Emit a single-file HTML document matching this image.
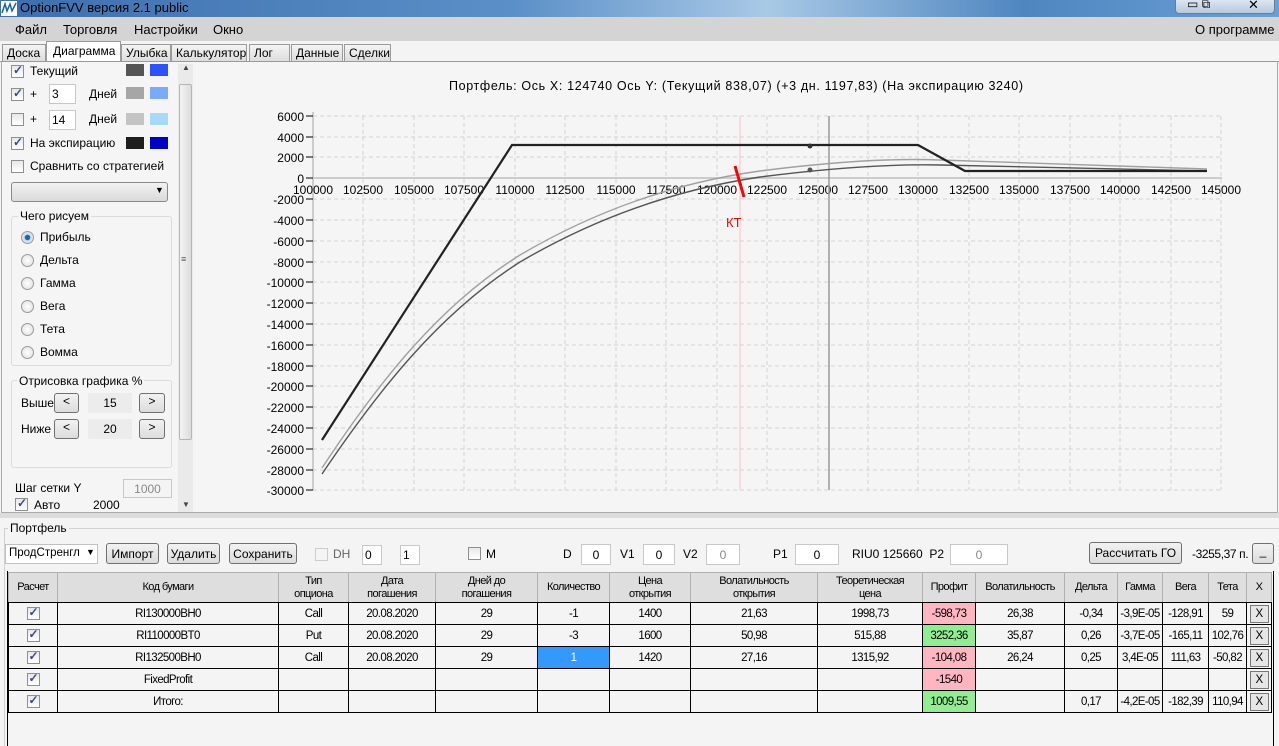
<!DOCTYPE html><html><head><meta charset="utf-8"><style>
*{box-sizing:border-box;margin:0;padding:0}
body{width:1279px;height:746px;overflow:hidden;background:#f4f4f4;font-family:"Liberation Sans",sans-serif;font-size:12px;color:#000;position:relative}
.a{position:absolute}
.cb{position:absolute;width:13px;height:13px;border:1px solid #8e8f8f;background:linear-gradient(#e8e8e8,#fff)}
.cb.c::after{content:"✓";position:absolute;left:1px;top:-3px;font-size:12px;color:#3a4a8a;font-weight:bold}
.ic{display:inline-block;position:relative;width:13px;height:13px;border:1px solid #8e8f8f;background:linear-gradient(#e8e8e8,#fff);vertical-align:middle}
.ic::after{content:"✓";position:absolute;left:1px;top:-3px;font-size:12px;color:#3a4a8a;font-weight:bold}
.rb{position:absolute;width:13px;height:13px;border-radius:50%;border:1px solid #9a9a9a;background:radial-gradient(#fff,#ddd)}
.btn{position:absolute;border:1px solid #707070;border-radius:3px;background:linear-gradient(#f2f2f2,#dcdcdc);text-align:center;font-size:12px}
.tb{position:absolute;border:1px solid #c8c8c8;background:#fff;text-align:center}
.tab{position:absolute;top:44px;height:18px;border:1px solid #9a9a9a;border-bottom:none;background:linear-gradient(#f4f4f4,#dcdcdc);font-size:12px;padding:1px 4px}
table{border-collapse:collapse;position:absolute;left:8px;top:572px;font-size:11.5px;font-family:"Liberation Sans",sans-serif;table-layout:fixed}
td{border:1px solid #000;text-align:center;height:22px;padding:0;letter-spacing:-0.6px;white-space:nowrap;overflow:hidden}
tr.h td{background:#dedede;border-color:#b0b0b0 #b0b0b0 #000;height:30px;line-height:13px;font-size:11px;white-space:normal}
.x{display:inline-block;border:1px solid #777;background:#e6e6e6;width:19px;height:18px;line-height:16px}
.ax{font-size:12px;fill:#000}
</style></head><body>
<div class="a" style="left:0;top:0;width:1279px;height:18px;background:linear-gradient(90deg,#3d6fae,#5a8fc7 40%,#a9c9e6 60%,#4f86c0 80%,#6aa0d4)"></div>
<svg class="a" style="left:1px;top:1px" width="16" height="15"><rect width="16" height="15" fill="#fff"/><path d="M1,12 L4,3 L6,10 L9,3 L11,10 L15,2" fill="none" stroke="#1a5fb4" stroke-width="1.5"/></svg>
<div class="a" style="left:20px;top:0;font-size:13px;color:#000">OptionFVV версия 2.1 public</div>
<div class="a" style="left:1175px;top:0;width:100px;height:14px;border:1px solid #6a7d95;border-top:none;border-radius:0 0 4px 4px;background:linear-gradient(#dbe6f2,#b7c9dd)"></div>
<div class="a" style="left:1187px;top:-3px;font-size:12px">▭ ⧉</div>
<div class="a" style="left:1248px;top:-3px;font-size:13px">✕</div>
<div class="a" style="left:0;top:17px;width:1279px;height:24px;background:#d4d4d4"></div>
<div class="a" style="left:15px;top:22px;font-size:13px">Файл</div>
<div class="a" style="left:63px;top:22px;font-size:13px">Торговля</div>
<div class="a" style="left:134px;top:22px;font-size:13px">Настройки</div>
<div class="a" style="left:213px;top:22px;font-size:13px">Окно</div>
<div class="a" style="left:1195px;top:22px;font-size:13px">О программе</div>
<div class="tab" style="left:2px;width:44px">Доска</div>
<div class="a" style="left:46px;top:41px;width:75px;height:22px;background:#fff;border:1px solid #9a9a9a;border-bottom:none;padding:2px 6px;font-size:12px">Диаграмма</div>
<div class="tab" style="left:121px;width:50px">Улыбка</div>
<div class="tab" style="left:171px;width:76px">Калькулятор</div>
<div class="tab" style="left:249px;width:41px">Лог</div>
<div class="tab" style="left:291px;width:52px">Данные</div>
<div class="tab" style="left:344px;width:47px">Сделки</div>
<div class="a" style="left:0;top:61px;width:1279px;height:1px;background:#9a9a9a"></div>
<div class="a" style="left:1px;top:62px;width:1277px;height:451px;background:#f5f5f5;border:1px solid #aaa;border-top:none"></div>
<!-- left panel -->
<div class="cb c" style="left:11px;top:65px"></div><div class="a" style="left:30px;top:64px">Текущий</div>
<div class="a" style="left:126px;top:64px;width:18px;height:12px;background:#555"></div><div class="a" style="left:150px;top:64px;width:18px;height:12px;background:#2a53ff"></div>
<div class="cb c" style="left:11px;top:88px"></div><div class="a" style="left:30px;top:87px">+</div>
<div class="tb" style="left:49px;top:84px;width:27px;height:20px;text-align:left;padding:2px 2px">3</div><div class="a" style="left:89px;top:87px">Дней</div>
<div class="a" style="left:126px;top:87px;width:18px;height:12px;background:#a6a6a6"></div><div class="a" style="left:150px;top:87px;width:18px;height:12px;background:#7ba9ff"></div>
<div class="cb" style="left:11px;top:113px"></div><div class="a" style="left:30px;top:112px">+</div>
<div class="tb" style="left:49px;top:110px;width:27px;height:20px;text-align:left;padding:2px 2px">14</div><div class="a" style="left:89px;top:112px">Дней</div>
<div class="a" style="left:126px;top:113px;width:18px;height:12px;background:#c4c4c4"></div><div class="a" style="left:150px;top:113px;width:18px;height:12px;background:#a9d8ff"></div>
<div class="cb c" style="left:11px;top:137px"></div><div class="a" style="left:30px;top:136px">На экспирацию</div>
<div class="a" style="left:126px;top:137px;width:18px;height:12px;background:#1e1e1e"></div><div class="a" style="left:150px;top:137px;width:18px;height:12px;background:#0000c8"></div>
<div class="cb" style="left:11px;top:160px"></div><div class="a" style="left:30px;top:159px">Сравнить со стратегией</div>
<div class="a" style="left:11px;top:182px;width:157px;height:20px;border:1px solid #8a8a8a;border-radius:3px;background:linear-gradient(#f2f2f2,#dadada)"></div>
<div class="a" style="left:155px;top:185px;font-size:9px">▼</div>
<div class="a" style="left:11px;top:216px;width:161px;height:150px;border:1px solid #dcdcdc;border-radius:3px"></div>
<div class="a" style="left:18px;top:209px;background:#f5f5f5;padding:0 2px">Чего рисуем</div>
<div class="rb" style="left:21px;top:231px;background:radial-gradient(#1a6aa8 30%,#cde 40%,#eee)"></div><div class="a" style="left:40px;top:230px">Прибыль</div>
<div class="rb" style="left:21px;top:254px"></div><div class="a" style="left:40px;top:253px">Дельта</div>
<div class="rb" style="left:21px;top:277px"></div><div class="a" style="left:40px;top:276px">Гамма</div>
<div class="rb" style="left:21px;top:300px"></div><div class="a" style="left:40px;top:299px">Вега</div>
<div class="rb" style="left:21px;top:323px"></div><div class="a" style="left:40px;top:322px">Тета</div>
<div class="rb" style="left:21px;top:346px"></div><div class="a" style="left:40px;top:345px">Вомма</div>
<div class="a" style="left:11px;top:380px;width:161px;height:88px;border:1px solid #dcdcdc;border-radius:3px"></div>
<div class="a" style="left:17px;top:374px;background:#f5f5f5;padding:0 2px">Отрисовка графика %</div>
<div class="a" style="left:21px;top:396px">Выше</div><div class="btn" style="left:54px;top:393px;width:25px;height:20px">&lt;</div>
<div class="a" style="left:88px;top:393px;width:44px;height:20px;background:#ececec;text-align:center;padding-top:3px">15</div><div class="btn" style="left:139px;top:393px;width:26px;height:20px">&gt;</div>
<div class="a" style="left:21px;top:422px">Ниже</div><div class="btn" style="left:54px;top:419px;width:25px;height:20px">&lt;</div>
<div class="a" style="left:88px;top:419px;width:44px;height:20px;background:#ececec;text-align:center;padding-top:3px">20</div><div class="btn" style="left:139px;top:419px;width:26px;height:20px">&gt;</div>
<div class="a" style="left:15px;top:481px">Шаг сетки Y</div>
<div class="tb" style="left:123px;top:479px;width:49px;height:19px;background:#f4f4f4;color:#888;padding-top:2px">1000</div>
<div class="cb c" style="left:15px;top:498px"></div><div class="a" style="left:34px;top:498px">Авто</div><div class="a" style="left:93px;top:498px">2000</div>
<div class="a" style="left:178px;top:64px;width:15px;height:448px;background:#eaeaea"></div>
<div class="a" style="left:179px;top:84px;width:13px;height:356px;border:1px solid #b5b5b5;border-radius:2px;background:linear-gradient(90deg,#f3f3f3,#dcdcdc)"></div>
<div class="a" style="left:182px;top:63px;font-size:8px;color:#444">▲</div><div class="a" style="left:182px;top:500px;font-size:8px;color:#444">▼</div>
<div class="a" style="left:181px;top:254px;font-size:9px;color:#555">≡</div>
<!-- chart -->
<svg class="a" style="left:193px;top:62px" width="1080" height="450">
<g transform="translate(-193,-62)">
<text x="449" y="90" textLength="574" lengthAdjust="spacing" style="font-size:12.5px">Портфель: Ось X: 124740 Ось Y:  (Текущий 838,07)  (+3 дн. 1197,83)  (На экспирацию 3240)</text>
<g stroke="#d2d2d2" stroke-dasharray="4,3" stroke-width="1">
<line x1="313" y1="116" x2="1222" y2="116"/><line x1="313" y1="137" x2="1222" y2="137"/><line x1="313" y1="157" x2="1222" y2="157"/>
<line x1="313" y1="199" x2="1222" y2="199"/><line x1="313" y1="220" x2="1222" y2="220"/><line x1="313" y1="241" x2="1222" y2="241"/><line x1="313" y1="262" x2="1222" y2="262"/><line x1="313" y1="282" x2="1222" y2="282"/><line x1="313" y1="303" x2="1222" y2="303"/><line x1="313" y1="324" x2="1222" y2="324"/><line x1="313" y1="345" x2="1222" y2="345"/><line x1="313" y1="366" x2="1222" y2="366"/><line x1="313" y1="386" x2="1222" y2="386"/><line x1="313" y1="407" x2="1222" y2="407"/><line x1="313" y1="428" x2="1222" y2="428"/><line x1="313" y1="449" x2="1222" y2="449"/><line x1="313" y1="470" x2="1222" y2="470"/><line x1="313" y1="490" x2="1222" y2="490"/>
<line x1="363" y1="116" x2="363" y2="490"/><line x1="414" y1="116" x2="414" y2="490"/><line x1="464" y1="116" x2="464" y2="490"/><line x1="515" y1="116" x2="515" y2="490"/><line x1="565" y1="116" x2="565" y2="490"/><line x1="616" y1="116" x2="616" y2="490"/><line x1="666" y1="116" x2="666" y2="490"/><line x1="717" y1="116" x2="717" y2="490"/><line x1="767" y1="116" x2="767" y2="490"/><line x1="818" y1="116" x2="818" y2="490"/><line x1="868" y1="116" x2="868" y2="490"/><line x1="918" y1="116" x2="918" y2="490"/><line x1="969" y1="116" x2="969" y2="490"/><line x1="1019" y1="116" x2="1019" y2="490"/><line x1="1070" y1="116" x2="1070" y2="490"/><line x1="1120" y1="116" x2="1120" y2="490"/><line x1="1171" y1="116" x2="1171" y2="490"/><line x1="1221" y1="116" x2="1221" y2="490"/>
</g>
<line x1="313" y1="112" x2="313" y2="490" stroke="#ccc" stroke-width="2"/>
<line x1="313" y1="178" x2="1222" y2="178" stroke="#ccc" stroke-width="2"/>
<g stroke="#000"><line x1="306" y1="116" x2="313" y2="116"/><line x1="306" y1="137" x2="313" y2="137"/><line x1="306" y1="157" x2="313" y2="157"/><line x1="306" y1="178" x2="313" y2="178"/><line x1="306" y1="199" x2="313" y2="199"/><line x1="306" y1="220" x2="313" y2="220"/><line x1="306" y1="241" x2="313" y2="241"/><line x1="306" y1="262" x2="313" y2="262"/><line x1="306" y1="282" x2="313" y2="282"/><line x1="306" y1="303" x2="313" y2="303"/><line x1="306" y1="324" x2="313" y2="324"/><line x1="306" y1="345" x2="313" y2="345"/><line x1="306" y1="366" x2="313" y2="366"/><line x1="306" y1="386" x2="313" y2="386"/><line x1="306" y1="407" x2="313" y2="407"/><line x1="306" y1="428" x2="313" y2="428"/><line x1="306" y1="449" x2="313" y2="449"/><line x1="306" y1="470" x2="313" y2="470"/><line x1="306" y1="490" x2="313" y2="490"/></g>
<g class="ax" text-anchor="end">
<text x="304" y="121">6000</text><text x="304" y="142">4000</text><text x="304" y="162">2000</text><text x="304" y="183">0</text><text x="304" y="204">-2000</text><text x="304" y="225">-4000</text><text x="304" y="246">-6000</text><text x="304" y="267">-8000</text><text x="304" y="287">-10000</text><text x="304" y="308">-12000</text><text x="304" y="329">-14000</text><text x="304" y="350">-16000</text><text x="304" y="371">-18000</text><text x="304" y="391">-20000</text><text x="304" y="412">-22000</text><text x="304" y="433">-24000</text><text x="304" y="454">-26000</text><text x="304" y="475">-28000</text><text x="304" y="495">-30000</text>
</g>
<g class="ax" text-anchor="middle">
<text x="313" y="194">100000</text><text x="363" y="194">102500</text><text x="414" y="194">105000</text><text x="464" y="194">107500</text><text x="515" y="194">110000</text><text x="565" y="194">112500</text><text x="616" y="194">115000</text><text x="666" y="194">117500</text><text x="717" y="194">120000</text><text x="767" y="194">122500</text><text x="818" y="194">125000</text><text x="868" y="194">127500</text><text x="918" y="194">130000</text><text x="969" y="194">132500</text><text x="1019" y="194">135000</text><text x="1070" y="194">137500</text><text x="1120" y="194">140000</text><text x="1171" y="194">142500</text><text x="1221" y="194">145000</text>
</g>
<line x1="740" y1="116" x2="740" y2="490" stroke="#ffc0c8" stroke-width="1"/>
<line x1="829" y1="116" x2="829" y2="490" stroke="#999" stroke-width="1.5"/>
<path d="M322,468 C380,380 440,305 520,255 C600,208 680,182 760,171 C830,162 890,158 940,160 C1010,162 1100,166 1207,169" fill="none" stroke="#a0a0a0" stroke-width="1.4"/>
<path d="M322,474 C380,388 440,313 520,262 C600,215 680,189 760,177 C830,168 890,164 940,165 C1010,166 1100,168 1207,171" fill="none" stroke="#555" stroke-width="1.4"/>
<path d="M322,440 L512,145 L918,145 L965,171 L1207,171" fill="none" stroke="#222" stroke-width="2.2"/>
<circle cx="810" cy="146" r="2.5" fill="#333"/><circle cx="810" cy="170" r="2.5" fill="#555"/>
<line x1="735" y1="166" x2="744" y2="197" stroke="#f00" stroke-width="3"/>
<text x="726" y="227" fill="#f00" style="font-size:13px">КТ</text>
</g></svg>
<!-- splitter -->
<div class="a" style="left:0;top:513px;width:1279px;height:5px;background:#dcdcdc"></div>
<div class="a" style="left:4px;top:528px;width:1275px;height:218px;border:1px solid #d0d0d0;border-right:none;border-bottom:none"></div>
<div class="a" style="left:8px;top:521px;background:#f4f4f4;padding:0 2px;font-size:12px">Портфель</div>
<div class="a" style="left:5px;top:544px;width:93px;height:20px;border:1px solid #c0c0c0;background:#fff;padding:2px 3px;font-size:11.5px;overflow:hidden;white-space:nowrap">ПродСтренгл&nbsp;&nbsp;&nbsp;&nbsp;</div>
<div class="a" style="left:86px;top:547px;font-size:9px">▼</div>
<div class="btn" style="left:106px;top:543px;width:53px;height:21px;padding-top:3px">Импорт</div>
<div class="btn" style="left:167px;top:543px;width:53px;height:21px;padding-top:3px">Удалить</div>
<div class="btn" style="left:229px;top:543px;width:68px;height:21px;padding-top:3px">Сохранить</div>
<div class="cb" style="left:315px;top:548px;border-color:#ccc;background:#f4f4f4"></div><div class="a" style="left:333px;top:547px;color:#666">DH</div>
<div class="tb" style="left:362px;top:545px;width:20px;height:20px;text-align:left;padding:2px">0</div>
<div class="tb" style="left:400px;top:545px;width:20px;height:20px;text-align:left;padding:2px">1</div>
<div class="cb" style="left:468px;top:547px"></div><div class="a" style="left:486px;top:547px">M</div>
<div class="a" style="left:563px;top:547px">D</div><div class="tb" style="left:581px;top:544px;width:30px;height:21px;padding-top:3px">0</div>
<div class="a" style="left:620px;top:547px">V1</div><div class="tb" style="left:643px;top:544px;width:32px;height:21px;padding-top:3px">0</div>
<div class="a" style="left:683px;top:547px">V2</div><div class="tb" style="left:706px;top:544px;width:34px;height:21px;padding-top:3px;color:#888">0</div>
<div class="a" style="left:773px;top:547px">P1</div><div class="tb" style="left:795px;top:544px;width:44px;height:21px;padding-top:3px">0</div>
<div class="a" style="left:852px;top:547px">RIU0 125660&nbsp; P2</div><div class="tb" style="left:950px;top:544px;width:58px;height:21px;padding-top:3px;color:#888">0</div>
<div class="btn" style="left:1089px;top:542px;width:93px;height:22px;padding-top:3px">Рассчитать ГО</div>
<div class="a" style="left:1192px;top:547px;letter-spacing:-0.4px">-3255,37 п.</div>
<div class="btn" style="left:1252px;top:543px;width:22px;height:21px">_</div>
<table>
<colgroup><col width="49"><col width="221"><col width="70"><col width="87"><col width="102"><col width="72"><col width="81"><col width="127"><col width="105"><col width="53"><col width="89"><col width="53"><col width="45"><col width="46"><col width="38"><col width="25"></colgroup>
<tr class="h"><td>Расчет</td><td>Код бумаги</td><td>Тип<br>опциона</td><td>Дата<br>погашения</td><td>Дней до<br>погашения</td><td>Количество</td><td>Цена<br>открытия</td><td>Волатильность<br>открытия</td><td>Теоретическая<br>цена</td><td>Профит</td><td>Волатильность</td><td>Дельта</td><td>Гамма</td><td>Вега</td><td>Тета</td><td>X</td></tr>
<tr><td><span class="ic"></span></td><td>RI130000BH0</td><td>Call</td><td>20.08.2020</td><td>29</td><td>-1</td><td>1400</td><td>21,63</td><td>1998,73</td><td style="background:#ffb6c1">-598,73</td><td>26,38</td><td>-0,34</td><td>-3,9E-05</td><td>-128,91</td><td>59</td><td><span class="x">X</span></td></tr>
<tr><td><span class="ic"></span></td><td>RI110000BT0</td><td>Put</td><td>20.08.2020</td><td>29</td><td>-3</td><td>1600</td><td>50,98</td><td>515,88</td><td style="background:#90ee90">3252,36</td><td>35,87</td><td>0,26</td><td>-3,7E-05</td><td>-165,11</td><td>102,76</td><td><span class="x">X</span></td></tr>
<tr><td><span class="ic"></span></td><td>RI132500BH0</td><td>Call</td><td>20.08.2020</td><td>29</td><td style="background:#3399ff;color:#fff">1</td><td>1420</td><td>27,16</td><td>1315,92</td><td style="background:#ffb6c1">-104,08</td><td>26,24</td><td>0,25</td><td>3,4E-05</td><td>111,63</td><td>-50,82</td><td><span class="x">X</span></td></tr>
<tr><td><span class="ic"></span></td><td>FixedProfit</td><td></td><td></td><td></td><td></td><td></td><td></td><td></td><td style="background:#ffb6c1">-1540</td><td></td><td></td><td></td><td></td><td></td><td><span class="x">X</span></td></tr>
<tr><td><span class="ic"></span></td><td>Итого:</td><td></td><td></td><td></td><td></td><td></td><td></td><td></td><td style="background:#90ee90">1009,55</td><td></td><td>0,17</td><td>-4,2E-05</td><td>-182,39</td><td>110,94</td><td><span class="x">X</span></td></tr>
</table>
<div class="a" style="left:7px;top:571px;width:1267px;height:175px;border-left:1px solid #000;border-right:1px solid #000;pointer-events:none"></div>
</body></html>
